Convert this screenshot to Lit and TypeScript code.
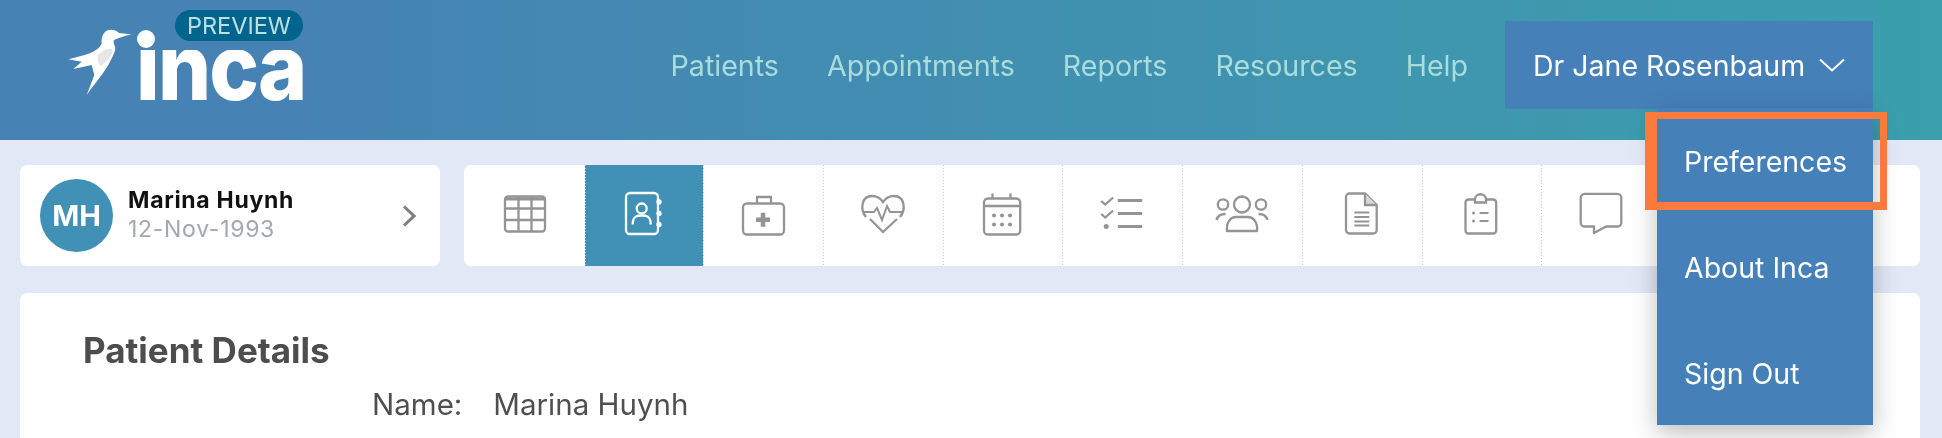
import { LitElement, html, css, svg } from "lit";
import { customElement } from "lit/decorators.js";

const icons = [
  svg`<rect x="6" y="6.500" width="40" height="35" rx="3"/><path stroke-width="3" d="M6 9h40"/><path d="M19.500 7v34M32.500 7v34M7 18.500h38M7 30h38"/>`,
  svg`<rect x="8" y="3" width="32" height="41" rx="4"/><circle cx="23.700" cy="18.500" r="5"/><path d="M14.700 34.500c0-9 5-9 9-9s9 0 9 9"/><circle cx="41" cy="12" r="1.500" fill="currentColor"/><circle cx="41" cy="23.500" r="1.500" fill="currentColor"/><circle cx="41" cy="34.500" r="1.500" fill="currentColor"/>`,
  svg`<rect x="6" y="13.500" width="41" height="31" rx="4"/><path d="M20 13.500V7h14v6.500"/><path stroke-width="4.500" d="M19 29.800h14M26 22.800v14"/>`,
  svg`<path d="M9 27C3 20 4 6 15 6c5 0 9 3 11 6 2-3 6-6 11-6 11 0 12 14 6 21"/><path stroke-width="2" d="M7 22h10l3-4 5 12 5-14 3 6h12"/><path d="M13 29l13 13 14-13"/>`,
  svg`<rect x="8" y="8.500" width="36.200" height="36" rx="4"/><path d="M8 16h36M16.500 3.500V9M34.500 3.500V9"/><g fill="currentColor" stroke="none"><circle cx="18" cy="25.500" r="2"/><circle cx="26" cy="25.500" r="2"/><circle cx="34" cy="25.500" r="2"/><circle cx="18" cy="34.500" r="2"/><circle cx="26" cy="34.500" r="2"/><circle cx="34" cy="34.500" r="2"/></g>`,
  svg`<path d="M5.200 11l4 3.500 8-7M5.200 24l4 3.500 8-7"/><circle cx="10.200" cy="36.500" r="2.500" fill="currentColor" stroke="none"/><path stroke-width="3" d="M21.800 10.500h24.400M21.800 23.500h24.400M21.800 36.500h24.400"/>`,
  svg`<circle cx="26" cy="14.500" r="8"/><circle cx="7" cy="14.500" r="5.200"/><circle cx="45" cy="14.500" r="5.200"/><path d="M11 41c-1-9 4-14 9-14h12c5 0 10 5 9 14z" stroke-linejoin="round"/><path d="M.5 30c1-4 5-6 9-6M51.500 30c-1-4-5-6-9-6"/>`,
  svg`<path d="M13.500 3.500H29L40.700 15v25a3.500 3.500 0 0 1-3.500 3.500H13.500A3.500 3.500 0 0 1 10 40V7a3.500 3.500 0 0 1 3.500-3.500z"/><path d="M29 3.500V15h11.700" fill="#d8d8d8"/><path stroke-width="2" d="M18.300 22.500h15M18.300 27h15M18.300 31.500h15M18.300 35.500h15"/>`,
  svg`<rect x="10.500" y="9.500" width="30.700" height="34" rx="3"/><path d="M20 9.500c0-7 11-7 11 0v3H20z" fill="#fff"/><g stroke-width="2"><path d="M24.500 23h9M24.500 31h9"/></g><circle cx="18.500" cy="23" r="1.500" fill="currentColor" stroke="none"/><circle cx="18.500" cy="31" r="1.500" fill="currentColor" stroke="none"/>`,
  svg`<path d="M9.700 3.800h32.600a4 4 0 0 1 4 4v24.700a4 4 0 0 1-4 4H31L19 43v-6.500H9.700a4 4 0 0 1-4-4V7.800a4 4 0 0 1 4-4z" stroke-linejoin="round"/>`,
];

@customElement("app-root")
export class AppRoot extends LitElement {
  static styles = css`
    :host { display: block; height: 438px; overflow: hidden; background: #e2e8f5; font-family: Inter, "Liberation Sans", sans-serif; position: relative; filter: blur(.5px); }
    * { box-sizing: border-box; }
    header { height: 140px; display: flex; align-items: flex-start; padding-right: 69px;
      background: linear-gradient(90deg, #4682b4 12%, #3b9fad 100%); }
    .logo { position: relative; margin-left: 67px; width: 240px; height: 110px; }
    .bird { position: absolute; left: 0; top: 28px; }
    .wordmark { position: absolute; left: 69px; top: 41px; font-size: 93px; line-height: 50px; font-weight: 800; color: #fff; letter-spacing: -2px; transform: scaleX(.9); transform-origin: left center; clip-path: inset(9px 0 -20px 0); }
    .dot { position: absolute; left: 70px; top: 29.500px; width: 18px; height: 18px; border-radius: 50%; background: #fff; }
    .pill { position: absolute; left: 108px; top: 10px; width: 128px; height: 31px; border-radius: 16px; background: #00648c; color: #b9e0e2; font-size: 23.500px; line-height: 31px; text-align: center; }
    nav { margin-left: auto; display: flex; gap: 48px; align-items: center; height: 131px; color: #a9dcda; font-size: 28.600px; }
    .user { margin-left: 37px; margin-top: 21px; width: 368px; height: 88px; background: #4680b8; color: #fff; font-size: 28.500px; display: flex; align-items: center; padding-left: 28px; gap: 14px; }
    .menu { position: absolute; left: 1657px; top: 108px; width: 216px; height: 317px; background: #4680b8; color: #fff; font-size: 28.500px; box-shadow: 0 8px 24px rgba(0,0,0,.26); z-index: 2; }
    .menu div { height: 106px; display: flex; align-items: center; padding-left: 27px; }
    .hl { position: absolute; left: 1645px; top: 112px; width: 242px; height: 98px; border: solid #fb7a3c; border-width: 7px 7px 8px 12px; z-index: 3; }
    .row { display: flex; gap: 24px; padding: 25px 22px 0 20px; }
    .patient { width: 420px; height: 101px; background: #fff; border-radius: 7px; display: flex; align-items: center; padding-left: 20px; flex: none; }
    .avatar { width: 73px; height: 73px; border-radius: 50%; background: #4091b5; color: #fff; font-weight: 700; font-size: 29px; display: flex; align-items: center; justify-content: center; flex: none; }
    .who { margin-left: 15px; flex: 1; }
    .who b { display: block; font-size: 23px; line-height: 28px; font-weight: 700; color: #111; letter-spacing: .7px; }
    .who span { display: block; font-size: 23px; line-height: 31px; color: #a0a8b0; letter-spacing: .7px; }
    .chev { margin-right: 24px; }
    .bar { flex: 1; height: 101px; background: #fff; border-radius: 7px; overflow: hidden; display: grid; grid-template-columns: 121px 118px repeat(8, 119.750px); }
    .cell { display: flex; align-items: center; justify-content: center; color: #949494;
      background: repeating-linear-gradient(to bottom, #c8c8c8 0 1px, transparent 1px 3px) left top / 1px 100% no-repeat; }
    .cell:first-child { background: none; }
    .cell svg { fill: none; stroke: currentColor; stroke-width: 2.300; overflow: visible; }
    .cell.on { background-color: #4091b5; color: #fff; }
    .card { margin: 27px 22px 0 20px; height: 200px; background: #fff; border-radius: 7px; padding: 39px 0 0 63px; }
    h2 { margin: 0; font-size: 35px; line-height: 36px; font-weight: 700; color: #4d4d4f; }
    .field { margin: 20px 0 0 289px; display: flex; gap: 31px; font-size: 29.500px; line-height: 32px; color: #4f4f4f; }
  `;

  render() {
    return html`
      <header>
        <div class="logo">
          <svg class="bird" width="66" height="70" viewBox="0 0 66 70">
            <path fill="#fff" d="M63.700 6.300L52 5C48 1 41 1 38 4c-3 3-4 8-3.300 11.300C33 20 28 23 23 25.300c-7 2.700-15 4.200-21.700 6l13.400 2.400L6.300 41l18.400-4 2.600 10-7.600 20c8.300-12 18.300-23 23.300-33.300 4-7.700 6-11.700 5-15-1-3.700-2-4.700-1-6.700 4-2 11-4 17.700-5.700z"/>
            <path fill="#e6e6e6" d="M31 27c7-7 13-7 15-5-1 6-6 12-13 16-2-4-3-8-2-11z"/>
          </svg>
          <div class="wordmark">inca</div>
          <div class="dot"></div>
          <div class="pill">PREVIEW</div>
        </div>
        <nav><span>Patients</span><span>Appointments</span><span>Reports</span><span>Resources</span><span>Help</span></nav>
        <div class="user"><span>Dr Jane Rosenbaum</span>
          <svg width="26" height="14" viewBox="0 0 26 14" fill="none" stroke="#fff" stroke-width="2"><path d="M1 1.500l12 11 12-11"/></svg>
        </div>
      </header>
      <div class="menu"><div>Preferences</div><div>About Inca</div><div>Sign Out</div></div>
      <div class="hl"></div>
      <div class="row">
        <div class="patient">
          <div class="avatar">MH</div>
          <div class="who"><b>Marina Huynh</b><span>12-Nov-1993</span></div>
          <svg class="chev" width="14" height="22" viewBox="0 0 14 22" fill="none" stroke="#7d7d7d" stroke-width="3"><path d="M2 1.500l10 9.500-10 9.500"/></svg>
        </div>
        <div class="bar">
          ${icons.map((p, i) => html`<div class="cell ${i === 1 ? "on" : ""}"><svg width="52" height="52" viewBox="0 0 52 52">${p}</svg></div>`)}
        </div>
      </div>
      <div class="card">
        <h2>Patient Details</h2>
        <div class="field"><span>Name:</span><span>Marina Huynh</span></div>
      </div>
    `;
  }
}
